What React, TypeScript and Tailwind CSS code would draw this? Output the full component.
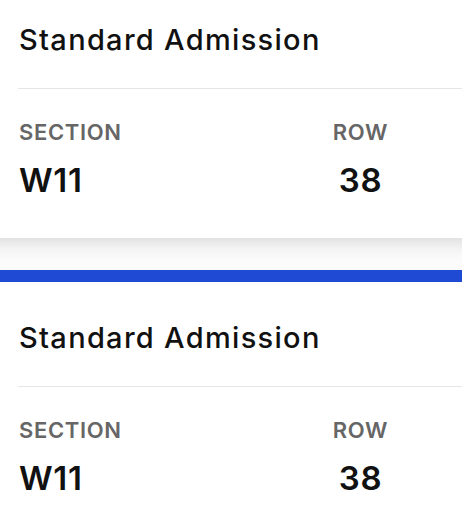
const tickets = [
  { id: 1, type: "Standard Admission", section: "W11", row: "38" },
  { id: 2, type: "Standard Admission", section: "W11", row: "38" },
];

export default function App() {
  const [first, second] = tickets;
  return (
    <div className="w-[462px] h-[532px] overflow-hidden bg-white" style={{ fontFamily: "Inter, 'Open Sans', sans-serif" }}>
      <TicketCard t={first} top="pt-[23px]" />
      {/* gap between tickets, card shadow falls onto it */}
      <div className="h-[32px] bg-[linear-gradient(to_bottom,#e2e2e2,#f4f4f4_35%,#fbfbfb_70%,#fbfbfb)]" />
      <div className="h-[12px] bg-[#1f4bd4]" />
      <TicketCard t={second} top="pt-[39px]" />
    </div>
  );
}

function TicketCard({ t, top }: { t: (typeof tickets)[number]; top: string }) {
  return (
    <div className={`bg-white ${top} pb-[42px]`}>
      <div className="pl-[19px] text-[29px] leading-[34px] font-medium tracking-[0.045em] text-[#111]">{t.type}</div>
      <div className="ml-[18px] mt-[31px] border-t border-[#e6e6e6]" />
      <div className="flex pl-[19px] pt-[30px]">
        <div className="w-[314px]">
          <div className="text-[22px] leading-[26px] font-semibold tracking-[0.03em] text-[#666]">SECTION</div>
          <div className="mt-[19px] text-[33px] leading-[32px] font-semibold tracking-[0.02em] text-[#111]">{t.section}</div>
        </div>
        <div className="w-[55px] flex flex-col items-center">
          <div className="text-[22px] leading-[26px] font-semibold tracking-[0.03em] text-[#666]">ROW</div>
          <div className="mt-[19px] text-[33px] leading-[32px] font-semibold tracking-[0.02em] text-[#111]">{t.row}</div>
        </div>
      </div>
    </div>
  );
}
